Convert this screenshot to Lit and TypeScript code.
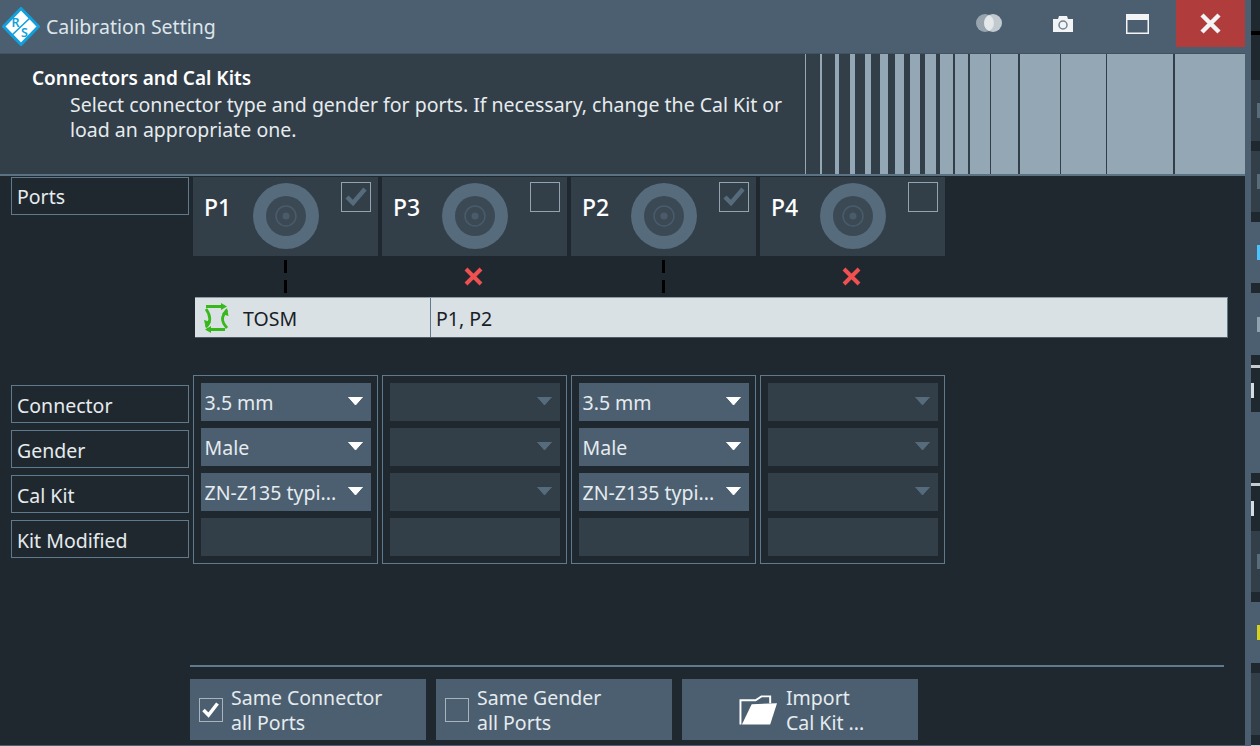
import { LitElement, css, html, svg } from 'lit';

const BARS = [
  [805, 806], [820, 822.3], [834.7, 838.7], [849.7, 854.7], [864.7, 871], [879.7, 887.7],
  [894.7, 903.7], [909.7, 919.7], [924.7, 935.7], [939.7, 952.7], [954.7, 968.3], [970, 989.7],
  [991, 1018.3], [1019.7, 1059.7], [1060.7, 1106], [1107.3, 1173], [1174.7, 1245],
];

const PORTS = [
  { name: 'P1', on: true },
  { name: 'P3', on: false },
  { name: 'P2', on: true },
  { name: 'P4', on: false },
];

const ROW_LABELS = ['Connector', 'Gender', 'Cal Kit', 'Kit Modified'];

// slices of the window behind, visible right of the dialog: height, kind, clipped glyph
const STRIP: [number, string, string?][] = [
  [31, 'b'], [4, 'k'], [45, 'b'], [61, 'd', 'gray'], [10, 'b'], [61, 'd', 'gray'], [10, 'b'],
  [61, 'm', 'blue'], [10, 'b'], [62, 'm', 'pale'], [10, 'b'], [3, 'l'], [44, 'b', 'text'],
  [61, 'm'], [10, 'b'], [3, 'l'], [45, 'b', 'text'], [61, 'd', 'gray'], [10, 'b'],
  [61, 'm', 'yellow'], [10, 'b'], [62, 'd'], [10, 'b'], [1, 'l'],
];

const connector = html`<svg class="jack" width="66" height="66" viewBox="0 0 66 66">
  <circle cx="33" cy="33" r="33" fill="#566b7b" />
  <circle cx="33" cy="33" r="20" fill="#3b4955" />
  <circle cx="33" cy="33" r="10" fill="none" stroke="#4a5b69" stroke-width="1.5" />
  <circle cx="33" cy="33" r="3.5" fill="#4a5b69" />
</svg>`;

const caret = svg`<path d="M0.5 0H14.5L7.5 8Z" stroke-linejoin="round" />`;

export class AppRoot extends LitElement {
  static styles = css`
    :host {
      display: flex;
      width: 1260px;
      height: 746px;
      overflow: hidden;
      background: #20282f;
      color: #e6ebee;
      font-family: 'Noto Sans', sans-serif;
      font-size: 19.5px;
    }

    .window {
      width: 1245px;
      height: 746px;
      flex: none;
      display: flex;
      flex-direction: column;
      border-bottom: 1px solid #4b5f71;
      box-sizing: border-box;
    }

    /* title bar */
    .title {
      height: 53px;
      flex: none;
      display: flex;
      align-items: flex-start;
      background: #4b5f71;
      border-bottom: 1px solid #42525f;
    }

    .logo {
      margin: 7px 6px 0 2px;
    }

    .title-text {
      margin-top: 13px;
      line-height: 28px;
      color: #dfe5e9;
    }

    .title-icons {
      margin-left: auto;
      display: flex;
      align-items: flex-start;
    }

    .close {
      width: 69px;
      height: 47px;
      margin-left: 27px;
      background: #b03c3c;
      display: flex;
      align-items: center;
      justify-content: center;
    }

    /* instruction header */
    .header {
      height: 120px;
      flex: none;
      display: flex;
      background: #323e48;
      border-bottom: 2px solid #5b7283;
    }

    .header-text {
      width: 805px;
      flex: none;
      padding: 12px 0 0 32px;
      box-sizing: border-box;
    }

    .header-text h1 {
      margin: 0;
      font-size: 19px;
      font-weight: 600;
      line-height: 25px;
      color: #fff;
    }

    .header-text p {
      margin: 1px 0 0 38px;
      width: 725px;
      line-height: 25px;
    }

    .bars {
      flex: 1;
      display: flex;
      background: #323e48;
    }

    .bar {
      flex: none;
      background: #94a7b5;
    }

    /* main area */
    .body {
      flex: 1;
      display: flex;
      flex-direction: column;
      padding-left: 11px;
    }

    .label {
      box-sizing: border-box;
      width: 178px;
      height: 38px;
      padding-left: 5px;
      border: 1.5px solid #5f7a8c;
      line-height: 37px;
      white-space: nowrap;
    }

    .labels .label {
      line-height: 39px;
    }

    .ports-row {
      display: flex;
      gap: 4px;
      margin-top: 1px;
    }

    .tiles {
      display: flex;
      gap: 4px;
    }

    .tile {
      width: 185px;
      height: 79px;
      box-sizing: border-box;
      padding: 6px 0 0 12px;
      display: flex;
      align-items: flex-start;
      background: #323e48;
    }

    .tile-name {
      width: 48px;
      margin-left: -1px;
      padding-right: 1px;
      font-size: 23px;
      font-weight: 500;
      line-height: 48px;
      color: #fff;
    }

    .tile .jack {
      display: block;
    }

    .check {
      width: 30px;
      height: 30px;
      margin: -1px 0 0 22px;
      box-sizing: border-box;
      border: 1.5px solid #94a3ae;
    }

    .check svg {
      display: block;
    }

    .links {
      display: flex;
      gap: 4px;
      margin-left: 182px;
      height: 41px;
    }

    .link {
      width: 185px;
      display: flex;
      flex-direction: column;
      align-items: center;
      justify-content: center;
    }

    .link svg {
      margin-right: 2px;
    }

    .dash {
      width: 3px;
      height: 13px;
      background: #000;
    }

    .dash + .dash {
      margin-top: 7px;
    }

    .method {
      display: flex;
      margin-left: 184px;
      width: 1033px;
      height: 41px;
      box-sizing: border-box;
      background: #dae1e4;
      color: #182026;
      border-top: 1px solid #8e9aa3;
      border-bottom: 1px solid #4e5a64;
      border-right: 1px solid #5f7a8c;
      line-height: 41px;
    }

    .method-name {
      width: 236px;
      flex: none;
      display: flex;
      align-items: center;
      gap: 12px;
      padding-left: 8px;
      box-sizing: border-box;
      border-right: 1px solid #5f7a8c;
    }

    .method-name span {
      margin-top: 2px;
    }

    .method-ports {
      padding-left: 5px;
    }

    .settings {
      display: flex;
      gap: 4px;
      margin-top: 37px;
    }

    .labels {
      display: flex;
      flex-direction: column;
      gap: 7px;
      padding-top: 10px;
    }

    .column {
      width: 185px;
      box-sizing: border-box;
      padding: 7px 6.5px;
      border: 1.5px solid #5f7a8c;
      display: flex;
      flex-direction: column;
      gap: 7px;
    }

    .drop {
      height: 38px;
      padding: 0 8px 0 4px;
      display: flex;
      justify-content: space-between;
      background: #323e48;
      line-height: 40px;
      white-space: nowrap;
    }

    .drop.active {
      background: #4b5f71;
    }

    .drop svg {
      margin-top: 14px;
      fill: #566b7b;
      stroke: #566b7b;
    }

    .drop.active svg {
      fill: #fff;
      stroke: #fff;
    }

    .rule {
      height: 2px;
      width: 1034px;
      margin: 101px 0 0 179px;
      background: #5f7a8c;
    }

    .actions {
      display: flex;
      gap: 10px;
      margin: 12px 0 0 179px;
    }

    .action {
      width: 236px;
      height: 61px;
      display: flex;
      align-items: center;
      background: #4b5f71;
      line-height: 25px;
    }

    .box {
      width: 24px;
      height: 24px;
      margin: 0 8px 0 9px;
      flex: none;
      box-sizing: border-box;
      border: 1.5px solid #a8b4bd;
    }

    .box svg {
      display: block;
    }

    .folder {
      margin: 0 9px 0 57px;
    }

    /* neighbouring window */
    .strip {
      flex: 1;
      display: flex;
      flex-direction: column;
      background: #4b5f71;
      padding-left: 6px;
    }

    .slice {
      flex: none;
      display: flex;
      align-items: center;
      background: #20282f;
    }

    .slice.d {
      background: #323e48;
    }

    .slice.m {
      background: #4b5f71;
    }

    .slice.k {
      background: #000;
    }

    .slice.l {
      background: #c4ccd2;
    }

    .mark {
      width: 3px;
      height: 15px;
      margin-left: 6px;
    }

    .mark.gray {
      background: #5a6c7a;
    }

    .mark.blue {
      background: #4cc3ff;
    }

    .mark.pale {
      background: #8fa2b0;
    }

    .mark.yellow {
      background: #d8d020;
    }

    .mark.text {
      width: 3px;
      margin-left: 0;
      background: #d6dde2;
    }
  `;

  renderTile(port: { name: string; on: boolean }) {
    return html`<div class="tile">
      <div class="tile-name">${port.name}</div>
      ${connector}
      <div class="check">
        ${port.on
          ? html`<svg width="27" height="27" viewBox="0 0 27 27">
              <path d="M5 14L11 20L23 6" fill="none" stroke="#566b7b" stroke-width="4.5" />
            </svg>`
          : ''}
      </div>
    </div>`;
  }

  renderLink(port: { on: boolean }) {
    if (port.on) {
      return html`<div class="link"><div class="dash"></div><div class="dash"></div></div>`;
    }
    return html`<div class="link">
      <svg width="19" height="19" viewBox="0 0 19 19">
        <path d="M2 2L17 17M17 2L2 17" stroke="#f05050" stroke-width="4" />
      </svg>
    </div>`;
  }

  renderColumn(port: { on: boolean }) {
    const values = port.on ? ['3.5 mm', 'Male', 'ZN-Z135 typi...'] : ['', '', ''];
    return html`<div class="column">
      ${values.map(
        value => html`<div class="drop ${port.on ? 'active' : ''}">
          <span>${value}</span>
          <svg width="15" height="9" viewBox="0 0 15 9">${caret}</svg>
        </div>`,
      )}
      <div class="drop"></div>
    </div>`;
  }

  render() {
    return html`<div class="window">
        <div class="title">
          <svg class="logo" width="38" height="39" viewBox="0 0 38 39">
            <path d="M19 1.5L36.5 19.5L19 37.5L1.5 19.5Z" fill="#fff" stroke="#12a0dc" stroke-width="3" />
            <path d="M9 29L29 10" stroke="#12a0dc" stroke-width="1.6" />
            <text x="9.5" y="19.5" font-size="12.5" font-weight="600" fill="#12a0dc">R</text>
            <text x="19" y="30" font-size="12.5" font-weight="600" fill="#12a0dc">S</text>
          </svg>
          <div class="title-text">Calibration Setting</div>
          <div class="title-icons">
            <svg style="margin-top:14px" width="26" height="18" viewBox="0 0 26 18">
              <circle cx="9" cy="9" r="9" fill="#98a5af" />
              <circle cx="17" cy="9" r="9" fill="#c2cad0" />
              <path d="M13 1A9 9 0 0 1 13 17A9 9 0 0 1 13 1Z" fill="#e4e8ea" />
            </svg>
            <svg style="margin:16px 0 0 51px" width="20" height="16" viewBox="0 0 20 16">
              <path d="M0 3H5L6 0H14L15 3H20V16H0Z" fill="#f2f4f5" />
              <circle cx="10" cy="9" r="4" fill="#f2f4f5" stroke="#6f8496" stroke-width="1.5" />
            </svg>
            <svg style="margin:14px 0 0 53px" width="23" height="20" viewBox="0 0 23 20">
              <path d="M0 0H23V6H0Z" fill="#f2f4f5" />
              <path d="M0.75 1V19.25H22.25V1" fill="none" stroke="#f2f4f5" stroke-width="1.5" />
            </svg>
            <div class="close">
              <svg width="21" height="21" viewBox="0 0 21 21">
                <path d="M2 2L19 19M19 2L2 19" stroke="#f4f4f4" stroke-width="4.5" />
              </svg>
            </div>
          </div>
        </div>

        <div class="header">
          <div class="header-text">
            <h1>Connectors and Cal Kits</h1>
            <p>
              Select connector type and gender for ports. If necessary, change the Cal Kit or load an
              appropriate one.
            </p>
          </div>
          <div class="bars">
            ${BARS.map(
              ([start, end], i) => html`<div
                class="bar"
                style="width:${end - start}px;margin-left:${i ? start - BARS[i - 1][1] : 0}px"
              ></div>`,
            )}
          </div>
        </div>

        <div class="body">
          <div class="ports-row">
            <div class="label">Ports</div>
            <div class="tiles">${PORTS.map(port => this.renderTile(port))}</div>
          </div>
          <div class="links">${PORTS.map(port => this.renderLink(port))}</div>
          <div class="method">
            <div class="method-name">
              <svg width="28" height="30" viewBox="0 0 28 30">
                <g fill="none" stroke="#38b81c" stroke-width="2.8">
                  <path d="M3 3.5H21M24 25C18 18 18 14 24 7M22 26.5H4M3 6C8 13 8 19 3 24" />
                </g>
                <g fill="#38b81c">
                  <path d="M18 0L24 3.5L18 7Z" />
                  <path d="M8 23L2 26.5L8 30Z" />
                  <path d="M19 11L24 5L25.5 13Z" />
                  <path d="M1 17L3 25.5L8 19Z" />
                </g>
              </svg>
              <span>TOSM</span>
            </div>
            <div class="method-ports">P1, P2</div>
          </div>
          <div class="settings">
            <div class="labels">
              ${ROW_LABELS.map(label => html`<div class="label">${label}</div>`)}
            </div>
            ${PORTS.map(port => this.renderColumn(port))}
          </div>
          <div class="rule"></div>
          <div class="actions">
            <div class="action">
              <div class="box">
                <svg width="21" height="21" viewBox="0 0 21 21">
                  <path d="M3.5 11L8.5 16L17.5 4.5" fill="none" stroke="#fff" stroke-width="3.5" />
                </svg>
              </div>
              <div>Same Connector<br />all Ports</div>
            </div>
            <div class="action">
              <div class="box"></div>
              <div>Same Gender<br />all Ports</div>
            </div>
            <div class="action">
              <svg class="folder" width="38" height="32" viewBox="0 0 39 32">
                <path d="M1.5 31V6H17L23 2H32V9" fill="none" stroke="#fff" stroke-width="2" />
                <path d="M3 31H32L39 9L13 10Z" fill="#fff" />
              </svg>
              <div>Import<br />Cal Kit ...</div>
            </div>
          </div>
        </div>
      </div>
      <div class="strip">
        ${STRIP.map(
          ([h, kind, mark]) => html`<div class="slice ${kind}" style="height:${h}px">
            ${mark ? html`<div class="mark ${mark}"></div>` : ''}
          </div>`,
        )}
      </div>`;
  }
}

customElements.define('app-root', AppRoot);
